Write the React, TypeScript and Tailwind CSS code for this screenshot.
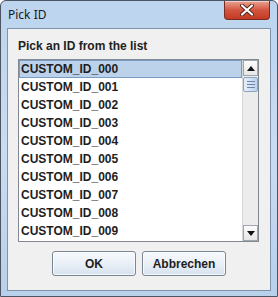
import { useState } from 'react';

const ids = Array.from({ length: 10 }, (_, i) => `CUSTOM_ID_${String(i).padStart(3, '0')}`);

function CloseButton() {
  return (
    <div className="absolute right-[7px] top-0 flex h-[19px] w-[46px] items-center justify-center rounded-b-[4px] border border-t-0 border-[#7a2b22] bg-gradient-to-b from-[#e8a394] via-[#d2553f] to-[#c23a24] shadow-[inset_0_1px_0_rgba(255,255,255,0.5)]">
      <svg width="14" height="12" viewBox="0 0 14 12">
        <path d="M2 1.5 L12 10.5 M12 1.5 L2 10.5" stroke="#5a2018" strokeWidth="4" strokeLinecap="round" />
        <path d="M2 1.5 L12 10.5 M12 1.5 L2 10.5" stroke="#ffffff" strokeWidth="2.2" strokeLinecap="round" />
      </svg>
    </div>
  );
}

function Scrollbar() {
  return (
    <div className="flex w-[16px] flex-col border-l border-[#d6d6d6] bg-[#ececec]">
      <div className="flex h-[16px] items-center justify-center border border-[#9ea6b0] bg-gradient-to-b from-[#fcfcfc] to-[#e6e6e6]">
        <svg width="8" height="5" viewBox="0 0 8 5"><path d="M0 5 L4 0 L8 5 Z" fill="#111" /></svg>
      </div>
      <div className="mt-px flex h-[15px] flex-col items-center justify-center gap-[2px] rounded-[2px] border border-[#8ea3bd] bg-gradient-to-r from-[#e4eefa] via-[#d3e2f4] to-[#bcd2ec]">
        <div className="h-px w-[8px] bg-[#6f87a8]" />
        <div className="h-px w-[8px] bg-[#6f87a8]" />
        <div className="h-px w-[8px] bg-[#6f87a8]" />
      </div>
      <div className="flex-1" />
      <div className="flex h-[16px] items-center justify-center border border-[#9ea6b0] bg-gradient-to-b from-[#fcfcfc] to-[#e6e6e6]">
        <svg width="8" height="5" viewBox="0 0 8 5"><path d="M0 0 L8 0 L4 5 Z" fill="#111" /></svg>
      </div>
    </div>
  );
}

function DialogButton({ label }: { label: string }) {
  return (
    <button className="h-[25px] w-[84px] rounded-[3px] border border-[#7b8694] bg-gradient-to-b from-[#f7f9fc] via-[#eaf0f7] to-[#d6e1ee] text-[12px] font-bold text-[#1e1e1e] shadow-[inset_0_0_0_1px_rgba(255,255,255,0.7)]">
      {label}
    </button>
  );
}

export default function App() {
  const [selected, setSelected] = useState(0);

  return (
    <div
      className="flex h-[297px] w-[278px] flex-col overflow-hidden rounded-t-[6px] border border-[#4b5563] bg-gradient-to-b from-[#bcd4ee] via-[#c9dcf1] to-[#b9d0ea]"
      style={{ fontFamily: '"Liberation Sans", Arial, sans-serif' }}
    >
      {/* Title bar */}
      <div className="relative flex h-[27px] shrink-0 items-center pl-[7px]">
        <span className="text-[12px] text-[#1a1a1a]" style={{ fontFamily: '"Noto Sans", "Liberation Sans", sans-serif' }}>
          Pick ID
        </span>
        <CloseButton />
      </div>

      {/* Client area */}
      <div className="mx-[6px] flex h-[263px] flex-col border border-[#7f93aa] bg-[#f0f0f0] px-[10px] pb-[14px] pt-[10px]">
        <div className="h-[14px] text-[12px] font-bold leading-[14px] text-[#222]">Pick an ID from the list</div>

        <div className="mr-px mt-[6px] flex h-[184px] border border-[#828790] bg-white">
          <div className="flex-1 overflow-hidden">
            {ids.map((id, i) => (
              <div
                key={id}
                onClick={() => setSelected(i)}
                className={
                  i === selected
                    ? 'flex h-[18px] items-center border border-[#7b9cc4] bg-[#bcd2ea] pl-[1px] text-[12px] font-bold text-[#1e1e1e]'
                    : 'flex h-[18px] items-center pl-[2px] text-[12px] font-bold text-[#1e1e1e]'
                }
              >
                {id}
              </div>
            ))}
          </div>
          <Scrollbar />
        </div>

        <div className="mt-[9px] flex justify-center gap-[6px]">
          <DialogButton label="OK" />
          <DialogButton label="Abbrechen" />
        </div>
      </div>
    </div>
  );
}
